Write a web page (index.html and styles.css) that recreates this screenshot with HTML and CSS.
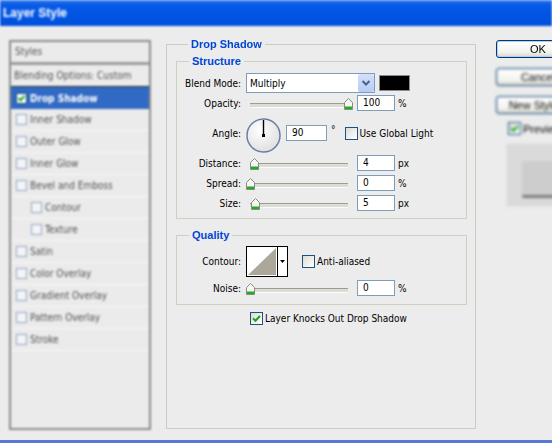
FILE: index.html
```html
<!DOCTYPE html>
<html lang="en">
<head>
    <meta charset="UTF-8">
    <title>Layer Style</title>
    <link rel="stylesheet" href="styles.css">
</head>
<body>
    <div class="window">
        <div class="titlebar">Layer Style</div>

        <div class="dialog">
            <!-- left: styles list -->
            <div class="styles-list">
                <div class="list-head">Styles</div>
                <div class="list-item blending">Blending Options: Custom</div>
                <div class="list-item selected">
                    <span class="cb small on"><svg width="9" height="9" viewBox="0 0 9 9"><path d="M1.5 4 L3.5 6.3 L7.5 2" fill="none" stroke="#21a121" stroke-width="2"/></svg></span>Drop Shadow
                </div>
                <div class="list-item"><span class="cb small"></span>Inner Shadow</div>
                <div class="list-item"><span class="cb small"></span>Outer Glow</div>
                <div class="list-item"><span class="cb small"></span>Inner Glow</div>
                <div class="list-item"><span class="cb small"></span>Bevel and Emboss</div>
                <div class="list-item sub"><span class="cb small"></span>Contour</div>
                <div class="list-item sub"><span class="cb small"></span>Texture</div>
                <div class="list-item"><span class="cb small"></span>Satin</div>
                <div class="list-item"><span class="cb small"></span>Color Overlay</div>
                <div class="list-item"><span class="cb small"></span>Gradient Overlay</div>
                <div class="list-item"><span class="cb small"></span>Pattern Overlay</div>
                <div class="list-item"><span class="cb small"></span>Stroke</div>
            </div>

            <!-- middle: drop shadow settings -->
            <fieldset class="group main">
                <legend class="soft">Drop Shadow</legend>

                <fieldset class="group structure">
                    <legend>Structure</legend>
                    <div class="row">
                        <span class="lbl">Blend Mode:</span>
                        <div class="select">
                            <span>Multiply</span>
                            <span class="select-btn"><svg width="16" height="18" viewBox="0 0 16 18"><path d="M4.5 7 L8 10.5 L11.5 7" fill="none" stroke="#4d6185" stroke-width="2"/></svg></span>
                        </div>
                        <span class="swatch"></span>
                    </div>
                    <div class="row">
                        <span class="lbl">Opacity:</span>
                        <div class="slider"><span class="thumb" style="left: 98px"><svg width="9" height="12" viewBox="0 0 9 12"><path d="M0.5 4.5 L4.5 0.5 L8.5 4.5 V11.5 H0.5 Z" fill="#f6f6f2" stroke="#8a8a84"/><rect x="1" y="8.5" width="7" height="2.5" fill="#1fae1f"/></svg></span></div>
                        <span class="num">100</span><span class="unit">%</span>
                    </div>
                    <div class="row angle-row">
                        <span class="lbl">Angle:</span>
                        <svg class="dial" width="35" height="35" viewBox="0 0 35 35">
                            <defs>
                                <radialGradient id="dialfill" cx="40%" cy="35%" r="70%">
                                    <stop offset="0" stop-color="#ffffff"/>
                                    <stop offset="1" stop-color="#dedede"/>
                                </radialGradient>
                            </defs>
                            <circle cx="17.5" cy="17.5" r="16.5" fill="url(#dialfill)" stroke="#6a7ca6" stroke-width="1.5"/>
                            <line x1="17.5" y1="17.5" x2="17.5" y2="2" stroke="#000" stroke-width="1.4"/>
                            <rect x="16" y="16" width="3" height="3" fill="#000"/>
                        </svg>
                        <span class="num angle">90</span><span class="deg">°</span>
                        <span class="cb global"></span><span class="cb-text">Use Global Light</span>
                    </div>
                    <div class="row">
                        <span class="lbl">Distance:</span>
                        <div class="slider"><span class="thumb" style="left: 4px"><svg width="9" height="12" viewBox="0 0 9 12"><path d="M0.5 4.5 L4.5 0.5 L8.5 4.5 V11.5 H0.5 Z" fill="#f6f6f2" stroke="#8a8a84"/><rect x="1" y="8.5" width="7" height="2.5" fill="#1fae1f"/></svg></span></div>
                        <span class="num">4</span><span class="unit">px</span>
                    </div>
                    <div class="row">
                        <span class="lbl">Spread:</span>
                        <div class="slider"><span class="thumb" style="left: 0px"><svg width="9" height="12" viewBox="0 0 9 12"><path d="M0.5 4.5 L4.5 0.5 L8.5 4.5 V11.5 H0.5 Z" fill="#f6f6f2" stroke="#8a8a84"/><rect x="1" y="8.5" width="7" height="2.5" fill="#1fae1f"/></svg></span></div>
                        <span class="num">0</span><span class="unit">%</span>
                    </div>
                    <div class="row">
                        <span class="lbl">Size:</span>
                        <div class="slider"><span class="thumb" style="left: 5px"><svg width="9" height="12" viewBox="0 0 9 12"><path d="M0.5 4.5 L4.5 0.5 L8.5 4.5 V11.5 H0.5 Z" fill="#f6f6f2" stroke="#8a8a84"/><rect x="1" y="8.5" width="7" height="2.5" fill="#1fae1f"/></svg></span></div>
                        <span class="num">5</span><span class="unit">px</span>
                    </div>
                </fieldset>

                <fieldset class="group quality">
                    <legend>Quality</legend>
                    <div class="row contour-row">
                        <span class="lbl">Contour:</span>
                        <svg class="contour" width="42" height="31" viewBox="0 0 42 31">
                            <rect x="0.5" y="0.5" width="41" height="30" fill="#fff" stroke="#000"/>
                            <path d="M2 29 L30 2 V29 Z" fill="#aca899"/>
                            <line x1="31.5" y1="0.5" x2="31.5" y2="30.5" stroke="#000"/>
                            <path d="M34 14 H39 L36.5 17 Z" fill="#000"/>
                        </svg>
                        <span class="cb anti"></span><span class="cb-text">Anti-aliased</span>
                    </div>
                    <div class="row">
                        <span class="lbl">Noise:</span>
                        <div class="slider"><span class="thumb" style="left: 0px"><svg width="9" height="12" viewBox="0 0 9 12"><path d="M0.5 4.5 L4.5 0.5 L8.5 4.5 V11.5 H0.5 Z" fill="#f6f6f2" stroke="#8a8a84"/><rect x="1" y="8.5" width="7" height="2.5" fill="#1fae1f"/></svg></span></div>
                        <span class="num">0</span><span class="unit">%</span>
                    </div>
                </fieldset>

                <div class="row knocks">
                    <span class="cb on"><svg width="11" height="11" viewBox="0 0 11 11"><path d="M2 5.2 L4.5 7.8 L9 3" fill="none" stroke="#21a121" stroke-width="2"/></svg></span><span class="cb-text">Layer Knocks Out Drop Shadow</span>
                </div>
            </fieldset>

            <!-- right: buttons and preview -->
            <div class="side">
                <div class="btn default">OK</div>
                <div class="btn far">Cancel</div>
                <div class="btn far">New Style...</div>
                <div class="preview-row far">
                    <span class="cb on"><svg width="11" height="11" viewBox="0 0 11 11"><path d="M2 5.2 L4.5 7.8 L9 3" fill="none" stroke="#21a121" stroke-width="2"/></svg></span><span class="cb-text">Preview</span>
                </div>
                <div class="preview far"><div class="preview-square"></div></div>
            </div>
        </div>
    </div>
</body>
</html>
```

FILE: styles.css
```css
* {
    box-sizing: border-box;
}
body {
    margin: 0;
    background-color: #ececec;
    font-family: "DejaVu Sans Condensed", "DejaVu Sans", sans-serif;
    font-stretch: condensed;
    font-size: 10px;
    color: #000;
    overflow: hidden;
}
.window {
    width: 552px;
    height: 443px;
    overflow: hidden;
}
.titlebar {
    height: 26px;
    padding-left: 3px;
    display: flex;
    align-items: center;
    background: linear-gradient(to bottom, #3a84f2 0, #0a5be8 4px, #0055e4 50%, #0050dc 100%);
    color: #fff;
    font: bold 12px "Liberation Sans", Arial, sans-serif;
    filter: blur(1px);
}
.dialog {
    height: 417px;
    display: flex;
    align-items: flex-start;
    padding-left: 9px;
    background-color: #ececec;
    border-bottom: 3px solid #5878d8;
}

/* styles list */
.styles-list {
    flex: none;
    width: 142px;
    height: 390px;
    margin-top: 14px;
    border: 2px solid #8c8c8c;
    background-color: #ebebeb;
    color: #505050;
    filter: blur(1.1px);
}
.list-head {
    height: 23px;
    padding-left: 4px;
    line-height: 20px;
    border-bottom: 3px solid #9c9c9c;
}
.list-item {
    height: 22px;
    display: flex;
    align-items: center;
    padding-left: 5px;
    border-bottom: 1px solid #f7f7f7;
}
.list-item .cb {
    margin-right: 3px;
}
.list-item.sub {
    padding-left: 20px;
}
.list-item.blending {
    padding-left: 3px;
    border-bottom: 1px solid #2a2a2a;
}
.list-item.selected {
    background-color: #316ac5;
    border-bottom: none;
    color: #fff;
    font-weight: bold;
}

/* checkboxes */
.cb {
    flex: none;
    width: 13px;
    height: 13px;
    display: inline-flex;
    align-items: center;
    justify-content: center;
    border: 1px solid #1c5180;
    background: linear-gradient(135deg, #dcdcd6, #ffffff);
}
.cb.small {
    width: 11px;
    height: 11px;
    border-color: #8fa6c8;
    background: #f4f4f4;
}
.cb.small.on {
    border-color: #1c5180;
    background: #fff;
}
.cb-text {
    margin-left: 2px;
}

/* group boxes */
fieldset {
    margin: 0;
    padding: 0;
    min-width: 0;
    border: 1px solid #cfcfc2;
}
legend {
    margin-left: 12px;
    padding: 0 3px;
    color: #0046d5;
    font: bold 11px/13px "Liberation Sans", Arial, sans-serif;
}
legend.soft {
    filter: blur(0.5px);
}
.main {
    flex: none;
    width: 310px;
    height: 391px;
    margin-top: 12px;
    margin-left: 15px;
    padding: 4px 8px 0 9px;
    border-color: #cbcbc4;
}
.structure {
    padding: 5px 0 5px 0;
}
.quality {
    margin-top: 10px;
    padding: 2px 0 6px 0;
}

/* rows */
.row {
    height: 20px;
    display: flex;
    align-items: center;
}
.lbl {
    flex: none;
    width: 64px;
    margin-right: 5px;
    text-align: right;
}
.select {
    flex: none;
    width: 129px;
    height: 20px;
    display: flex;
    align-items: center;
    justify-content: space-between;
    padding-left: 3px;
    border: 1px solid #7f9db9;
    background-color: #fff;
}
.select-btn {
    width: 16px;
    height: 18px;
    display: flex;
    border-radius: 2px;
    background: linear-gradient(to bottom, #d3e0fb, #b6cbf6);
}
.swatch {
    flex: none;
    width: 31px;
    height: 16px;
    margin-left: 4px;
    border: 1px solid #8c8c8c;
    background-color: #000;
}
.slider {
    position: relative;
    flex: none;
    width: 107px;
    height: 20px;
}
.slider::before {
    content: "";
    position: absolute;
    left: 4px;
    right: 5px;
    top: 10px;
    height: 3px;
    border-top: 1px solid #9d9d96;
    border-bottom: 1px solid #fbfbf8;
    background-color: #dcdcd4;
}
.thumb {
    position: absolute;
    top: 5px;
    display: flex;
}
.num {
    flex: none;
    width: 38px;
    height: 16px;
    margin-left: 4px;
    padding-left: 5px;
    line-height: 14px;
    border: 1px solid #7f9db9;
    background-color: #fff;
}
.unit {
    margin-left: 3px;
}
.angle-row {
    height: 40px;
}
.dial {
    flex: none;
    margin-top: 4px;
}
.num.angle {
    width: 41px;
    margin-left: 5px;
}
.deg {
    align-self: flex-start;
    margin-top: 11px;
    margin-left: 4px;
}
.cb.global {
    margin-left: 9px;
}
.contour-row {
    height: 34px;
}
.contour {
    flex: none;
}
.cb.anti {
    margin-left: 14px;
}
.knocks {
    margin-top: 3px;
    padding-left: 74px;
}

/* buttons and preview */
.side {
    flex: none;
    width: 84px;
    margin-top: 14px;
    margin-left: 20px;
    display: flex;
    flex-direction: column;
    font-family: "Liberation Sans", Arial, sans-serif;
    font-size: 11px;
}
.btn {
    height: 18px;
    margin-bottom: 10px;
    border: 1px solid #003c74;
    border-radius: 3px;
    background: linear-gradient(to bottom, #ffffff, #f2f2ee 70%, #d8d6cc);
    line-height: 16px;
    text-align: center;
}
.btn.default {
    box-shadow: inset 0 0 0 1px #b9cdf3;
    filter: blur(0.4px);
}
.far {
    filter: blur(1.4px);
}
.preview-row {
    display: flex;
    align-items: center;
    padding-left: 12px;
    margin-top: -2px;
}
.preview {
    height: 64px;
    margin-top: 8px;
    margin-left: 10px;
    padding: 17px 0 0 15px;
    border: 1px solid #e4e4e4;
    background-color: #dadada;
}
.preview-square {
    width: 70px;
    height: 37px;
    border-radius: 2px;
    background-color: #cdcdcd;
    border-bottom: 3px solid #7a7a7a;
}
```
